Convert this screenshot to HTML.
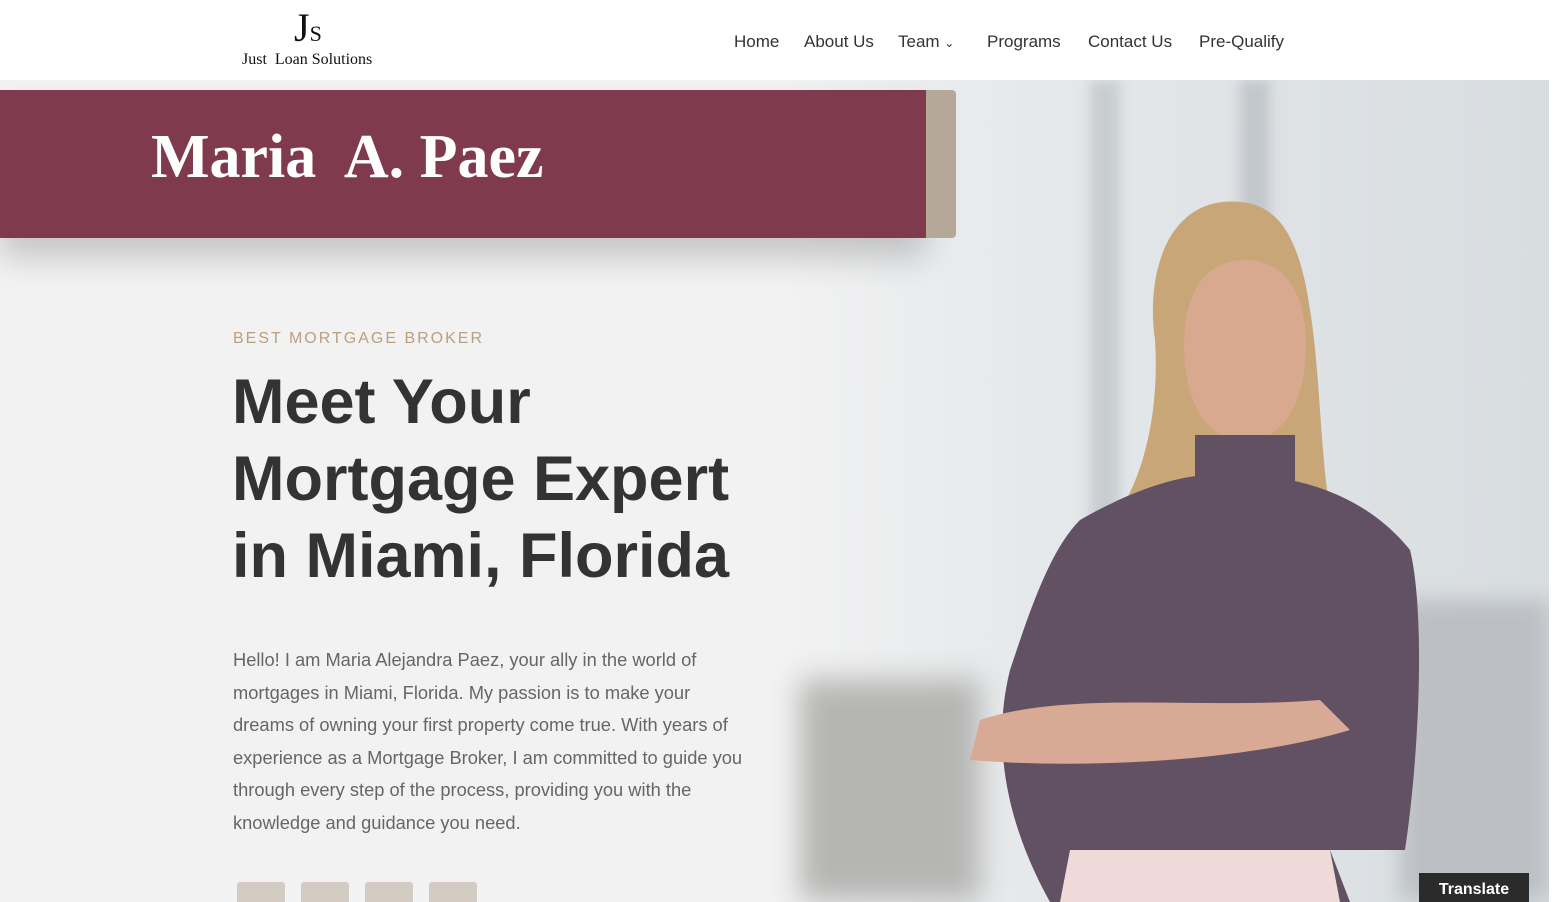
<!DOCTYPE html>
<html><head><style>
*{margin:0;padding:0;box-sizing:border-box}
html,body{width:1555px;height:902px;overflow:hidden;background:#f2f2f2}
body{font-family:"Liberation Sans",sans-serif;position:relative}
.hdr{position:absolute;left:0;top:0;width:1549px;height:80px;background:#fff;z-index:5}
.nav{position:absolute;top:32px;font-size:17px;color:#333}
.bg{position:absolute;left:780px;top:80px;width:770px;height:822px;background:linear-gradient(90deg,#f2f2f2 0%,#e8eaec 25%,#dfe3e6 60%,#d8dde0 100%)}
.banner{position:absolute;left:0;top:90px;width:926px;height:148px;background:#7f3a4d;box-shadow:0 20px 30px rgba(0,0,0,.18);z-index:3}
.tab{position:absolute;left:926px;top:90px;width:30px;height:148px;background:#b6a898;border-radius:0 4px 4px 0;z-index:3}
.sq{position:absolute;top:882px;width:48px;height:30px;background:#d4cbc2;border-radius:3px}
</style></head><body>
<div class="bg"></div>
<div style="position:absolute;left:1090px;top:80px;width:30px;height:500px;background:#c8cdd0;filter:blur(6px)"></div>
<div style="position:absolute;left:1240px;top:80px;width:30px;height:500px;background:#c2c7cb;filter:blur(6px)"></div>
<div style="position:absolute;left:800px;top:680px;width:180px;height:220px;background:#b5b5b3;filter:blur(14px)"></div>
<div style="position:absolute;left:1400px;top:600px;width:150px;height:300px;background:#bcc0c4;filter:blur(10px)"></div>
<svg style="position:absolute;left:950px;top:190px" width="480" height="712">
<path d="M290 12 C220 5 195 80 205 150 C210 230 190 290 170 320 L380 320 C370 260 370 180 360 120 C350 50 330 15 290 12Z" fill="#c9a678"/>
<path d="M295 70 C245 70 230 120 235 175 C240 220 260 250 295 252 C330 250 350 220 355 175 C360 120 345 70 295 70Z" fill="#d8a98e"/>
<path d="M245 245 L245 300 L345 300 L345 245Z" fill="#625163"/>
<path d="M130 330 C200 290 250 280 300 285 C360 288 420 310 460 360 C475 420 470 560 455 660 L380 660 L400 712 L100 712 C60 640 40 560 60 480 C80 420 100 360 130 330Z" fill="#625163"/>
<path d="M30 530 C120 500 250 520 370 510 L400 540 C300 570 140 580 20 570Z" fill="#d8a994"/>
<path d="M120 660 L380 660 L390 712 L110 712Z" fill="#efd9d9"/>
</svg>
<div class="hdr">
<div style="position:absolute;left:294px;top:4px;font-family:'Liberation Serif',serif;font-size:40px;color:#111">J<span style="font-size:22px">S</span></div>
<div style="position:absolute;left:242px;top:51px;font-family:'Liberation Serif',serif;font-size:16px;color:#111">Just&nbsp; Loan Solutions</div>
<div class="nav" style="left:734px">Home</div>
<div class="nav" style="left:804px">About Us</div>
<div class="nav" style="left:898px">Team <span style="font-size:12px">&#8964;</span></div>
<div class="nav" style="left:987px">Programs</div>
<div class="nav" style="left:1088px">Contact Us</div>
<div class="nav" style="left:1199px">Pre-Qualify</div>
</div>
<div style="position:absolute;left:1549px;top:0;width:6px;height:902px;background:#fff"></div>
<div class="banner"><div style="position:absolute;left:151px;top:32px;font-family:'Liberation Serif',serif;font-weight:bold;font-size:62px;color:#fff">Maria&nbsp; A. Paez</div></div>
<div class="tab"></div>
<div style="position:absolute;left:233px;top:330px;font-size:16px;letter-spacing:2px;color:#bc9f7f">BEST MORTGAGE BROKER</div>
<div style="position:absolute;left:232px;top:364px;font-size:63px;line-height:77px;font-weight:bold;color:#333">Meet Your<br>Mortgage Expert<br>in Miami, Florida</div>
<div style="position:absolute;left:233px;top:644px;width:515px;font-size:18.3px;line-height:32.5px;color:#666">Hello! I am Maria Alejandra Paez, your ally in the world of mortgages in Miami, Florida. My passion is to make your dreams of owning your first property come true. With years of experience as a Mortgage Broker, I am committed to guide you through every step of the process, providing you with the knowledge and guidance you need.</div>
<div class="sq" style="left:237px"></div><div class="sq" style="left:301px"></div><div class="sq" style="left:365px"></div><div class="sq" style="left:429px"></div>
<div style="position:absolute;left:1419px;top:873px;width:110px;height:29px;background:#2b2b2b;color:#fff;font-weight:bold;font-size:16px;text-align:center;line-height:34px">Translate</div>
</body></html>
